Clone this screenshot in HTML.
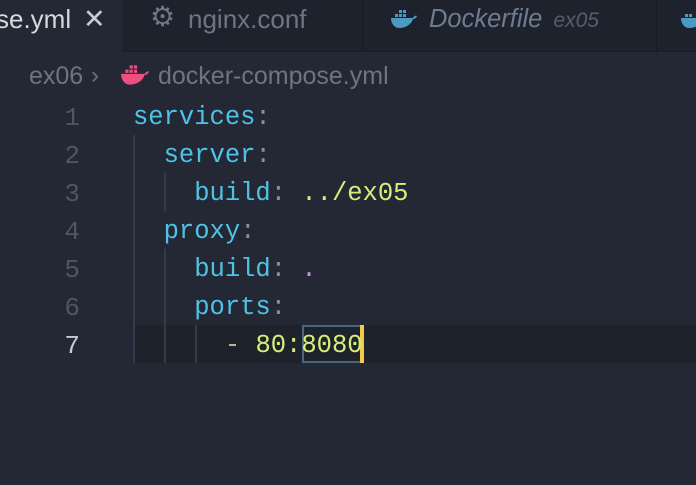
<!DOCTYPE html>
<html><head><meta charset="utf-8"><style>
*{margin:0;padding:0;box-sizing:border-box}
body{width:696px;height:485px;background:#232834;overflow:hidden;position:relative;font-family:"Liberation Sans",sans-serif}
.tabbar{position:absolute;left:0;top:0;width:696px;height:52px;background:#1e222c;border-bottom:1px solid #1a1d25}
.tab{position:absolute;top:0;height:52px;font-size:26px;line-height:38px;color:#6c7585;white-space:nowrap}
.t1{left:0;width:122px;background:#232834;color:#d6d9de;height:53px}
.t2{left:122px;width:241px;border-right:1px solid #171a21}
.t3{left:363px;width:294px;border-right:1px solid #171a21}
.bc{position:absolute;top:59px;left:29px;font-size:25px;line-height:34px;color:#6c7585;white-space:nowrap}
.code{position:absolute;left:0;top:99px;width:696px;font-family:"Liberation Mono",monospace;font-size:25.5px;}
.ln{position:absolute;left:0;width:80px;text-align:right;color:#4e5565;height:38px;line-height:38px;font-size:26px}
.l{position:absolute;left:133px;height:38px;line-height:38px;white-space:pre;color:#8a8f98}
.k{color:#4ec3e6}.s{color:#d5ef78}.d{color:#c8b090}
.g{position:absolute;width:2px;background:#343a47}
</style></head><body>
<div class="tabbar">
<div class="tab t1"><span style="position:absolute;left:-4px;top:0">se.yml</span><span style="position:absolute;left:83px;top:0;font-size:27px;color:#c7cbd2">✕</span></div>
<div class="tab t2"><span style="position:absolute;left:28px;top:-2px;font-size:28px;color:#6d7884">⚙</span><span style="position:absolute;left:66px">nginx.conf</span></div>
<div class="tab t3"><svg style="position:absolute;left:27px;top:8px" width="28" height="22" viewBox="0 0 28 22"><g fill="#4a9bc4"><rect x="5" y="6" width="3" height="3"/><rect x="9" y="6" width="3" height="3"/><rect x="13" y="6" width="3" height="3"/><rect x="9" y="2" width="3" height="3"/><rect x="13" y="2" width="3" height="3"/><path d="M1 10h22c1-2 3-3 4-2-1 2-2 3-4 3-2 6-8 9-14 9C4 20 1 15 1 10z"/></g></svg><span style="position:absolute;left:66px;font-style:italic;color:#6e7c92;font-size:25.5px">Dockerfile <span style="font-size:21px;color:#555d6c;margin-left:4px">ex05</span></span></div>
<div class="tab" style="left:657px;width:40px"><svg style="position:absolute;left:23px;top:8px" width="28" height="22" viewBox="0 0 28 22"><g fill="#4a9bc4"><rect x="5" y="6" width="3" height="3"/><rect x="9" y="6" width="3" height="3"/><path d="M1 10h22c1-2 3-3 4-2-1 2-2 3-4 3-2 6-8 9-14 9C4 20 1 15 1 10z"/></g></svg></div>
</div>
<div class="bc">ex06<span style="position:absolute;left:62px;font-size:24px">›</span><svg style="position:absolute;left:91px;top:4px" width="30" height="24" viewBox="0 0 28 22"><g fill="#ee4f80"><rect x="5" y="6" width="3" height="3"/><rect x="9" y="6" width="3" height="3"/><rect x="13" y="6" width="3" height="3"/><rect x="9" y="2" width="3" height="3"/><rect x="13" y="2" width="3" height="3"/><path d="M1 10h22c1-2 3-3 4-2-1 2-2 3-4 3-2 6-8 9-14 9C4 20 1 15 1 10z"/></g></svg><span style="position:absolute;left:129px">docker-compose.yml</span></div>
<div style="position:absolute;left:133px;top:325px;width:563px;height:38px;background:#1e222b"></div>
<div class="g" style="left:133px;top:135px;height:228px"></div>
<div class="g" style="left:164px;top:173px;height:38px"></div>
<div class="g" style="left:164px;top:249px;height:114px"></div>
<div class="g" style="left:195px;top:325px;height:38px"></div>
<div style="position:absolute;left:302px;top:325px;width:60px;height:38px;border:2px solid #4e6580"></div>
<div style="position:absolute;left:360px;top:325px;width:4px;height:38px;background:#f7c948"></div>
<div class="code">
<div class="ln" style="top:0">1</div><div class="l" style="top:0"><span class="k">services</span>:</div>
<div class="ln" style="top:38px">2</div><div class="l" style="top:38px">  <span class="k">server</span>:</div>
<div class="ln" style="top:76px">3</div><div class="l" style="top:76px">    <span class="k">build</span>: <span class="s">../ex05</span></div>
<div class="ln" style="top:114px">4</div><div class="l" style="top:114px">  <span class="k">proxy</span>:</div>
<div class="ln" style="top:152px">5</div><div class="l" style="top:152px">    <span class="k">build</span>: <span style="color:#c792ea">.</span></div>
<div class="ln" style="top:190px">6</div><div class="l" style="top:190px">    <span class="k">ports</span>:</div>
<div class="ln" style="top:228px;color:#c5c9d0">7</div><div class="l" style="top:228px">      <span class="d">-</span> <span class="s">80:8080</span></div>
</div>
</body></html>
